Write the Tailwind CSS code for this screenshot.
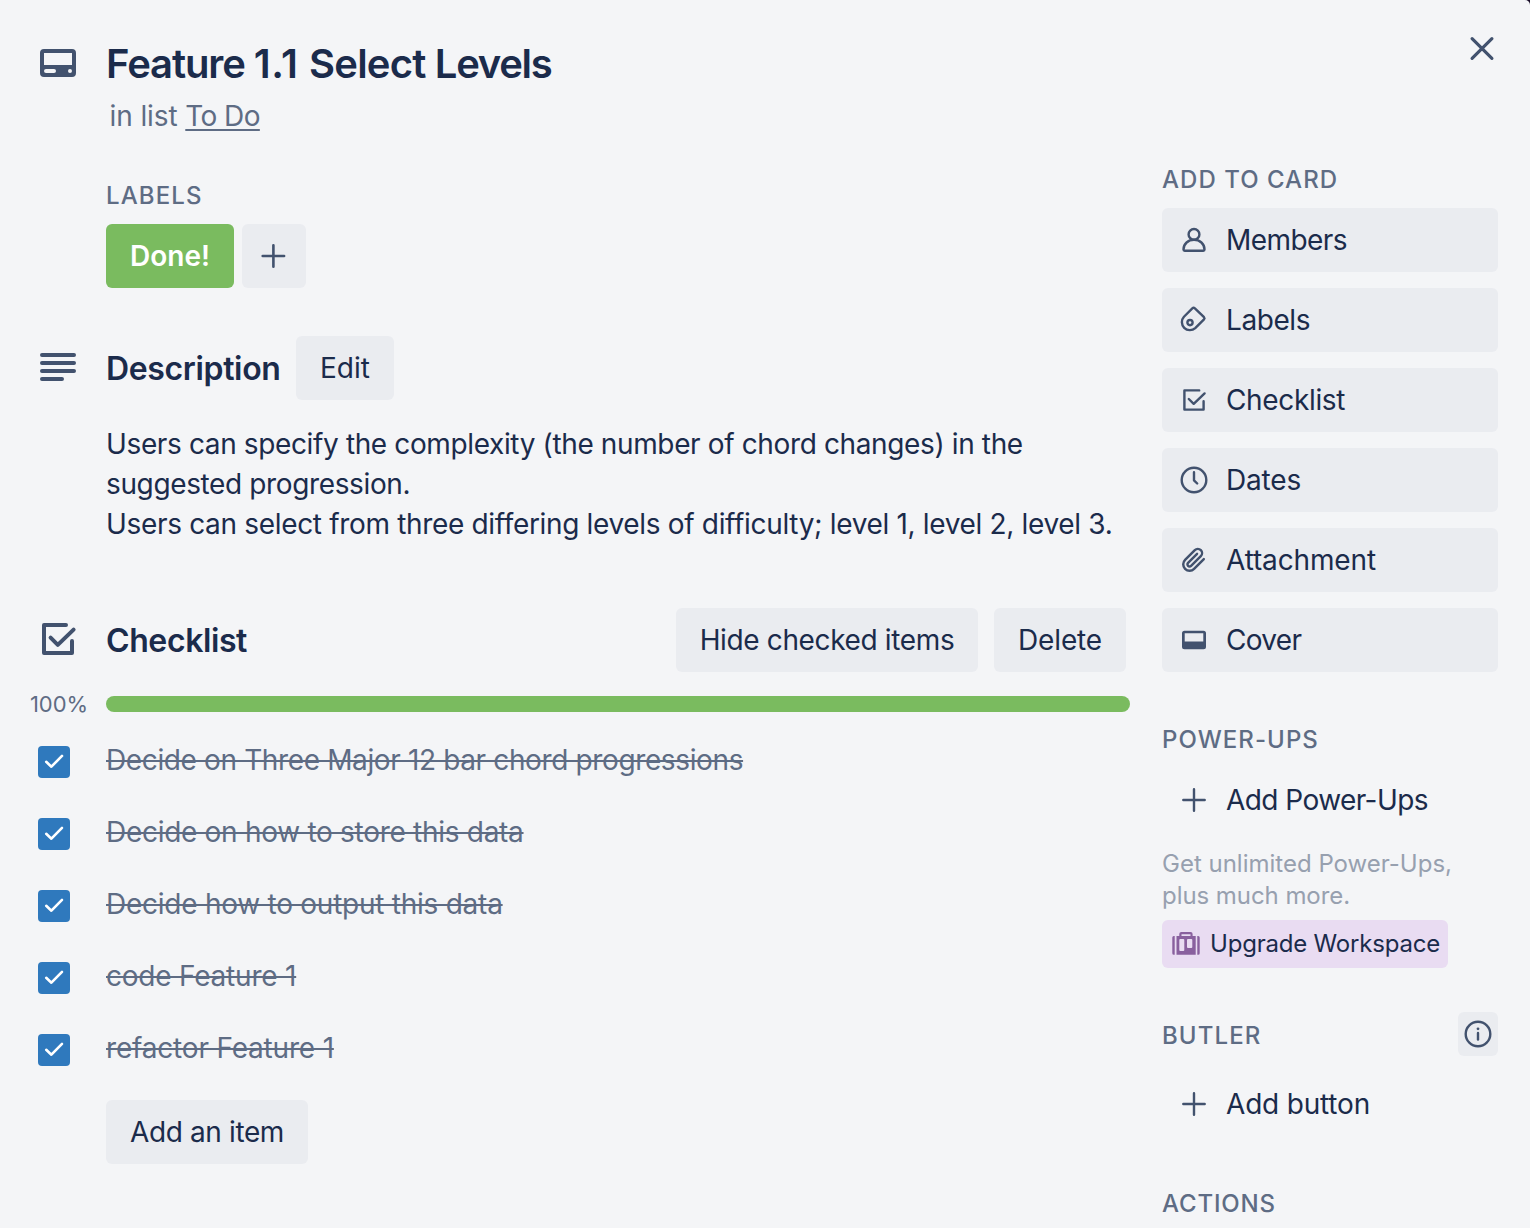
<!DOCTYPE html>
<html lang="en">
<head>
<meta charset="utf-8">
<title>Feature 1.1 Select Levels</title>
<script src="https://cdn.jsdelivr.net/npm/@tailwindcss/browser@4"></script>
</head>
<body class="bg-[#170b26] font-['Inter',sans-serif] text-[28px] leading-10 text-[#1b2b4b]">
<div class="relative flex h-[1228px] w-[1530px] overflow-hidden rounded-tr-[5px] bg-[#f4f5f7] whitespace-nowrap">

  <!-- Close -->
  <button class="absolute top-6 right-6 size-12 text-[#42526e]" aria-label="Close">
    <svg class="size-12" viewBox="0 0 48 48" fill="none" stroke="currentColor" stroke-width="3.2" stroke-linecap="round"><path d="M14.1 14.6 33.9 34.4M33.9 14.6 14.1 34.4"/></svg>
  </button>

  <main class="w-[1130px] shrink-0 pt-10">
    <!-- Card title -->
    <header class="flex">
      <div class="w-[106px] shrink-0 pl-[34px]">
        <svg class="-mt-px size-12 text-[#42526e]" viewBox="0 0 24 24" fill="currentColor"><path fill-rule="evenodd" d="M5 5h14a2 2 0 0 1 2 2v10a2 2 0 0 1-2 2H5a2 2 0 0 1-2-2V7a2 2 0 0 1 2-2Zm0 2v6h14V7H5Zm1 8a1 1 0 1 0 0 2h4a1 1 0 1 0 0-2H6Zm12 0a1 1 0 1 0 0 2 1 1 0 0 0 0-2Z"/></svg>
      </div>
      <div>
        <h1 class="text-[40px] leading-12 font-semibold tracking-[-0.8px]"><span class="tracking-[-1.1px]">Feature </span><span class="tracking-[0.55px]">1.1 </span>Select <span class="tracking-[-1.3px]">Levels</span></h1>
        <p class="mt-2 pl-[3.5px] tracking-[-0.1px] text-[#5e6c84]">in list <a class="tracking-[-0.6px] underline decoration-2 underline-offset-[3px]">To Do</a></p>
      </div>
    </header>

    <!-- Labels -->
    <section class="mt-12 pl-[106px]">
      <h3 class="text-2xl leading-6 font-medium tracking-[1.1px] text-[#5e6c84]">LABELS</h3>
      <div class="mt-4 flex gap-2">
        <span class="flex h-16 w-32 items-center justify-center rounded-md bg-[#7abb5f] font-semibold text-white">Done!</span>
        <button class="flex size-16 items-center justify-center rounded-md bg-[#eaecf0] text-[#42526e]">
          <svg class="size-10" viewBox="0 0 40 40" fill="none" stroke="currentColor" stroke-width="2.6" stroke-linecap="round"><path d="M19.4 9.3v21.4M8.7 20h21.4"/></svg>
        </button>
      </div>
    </section>

    <!-- Description -->
    <section class="mt-12">
      <div class="flex h-16 items-center">
        <div class="w-[106px] shrink-0 pl-[34px]">
          <svg class="-mt-0.5 size-12 text-[#42526e]" viewBox="0 0 48 48" fill="none" stroke="currentColor" stroke-width="4" stroke-linecap="round"><path d="M8 12h32M8 20h32M8 28h32M8 36h20"/></svg>
        </div>
        <h2 class="w-[174px] pt-0.5 text-[32px] font-semibold tracking-[-0.35px]">Description</h2>
        <button class="ml-4 h-16 w-[98px] rounded-md bg-[#eaecf0]">Edit</button>
      </div>
      <p class="mt-6 pl-[106px] tracking-[-0.37px]">Users can specify the complexity (the number of chord changes) in the<br>suggested progression.<br><span class="tracking-[-0.33px]">Users can select from three differing levels of difficulty; level 1, level 2, level 3.</span></p>
    </section>

    <!-- Checklist -->
    <section class="mt-16">
      <div class="flex h-16 items-center pr-1">
        <div class="w-[106px] shrink-0 pl-[34px]">
          <svg class="-mt-0.5 size-12 text-[#42526e]" viewBox="0 0 48 48" fill="none" stroke="currentColor" stroke-width="4" stroke-linecap="round" stroke-linejoin="round"><path d="M32 10H10v28h28V26"/><path d="m16.6 22.7 7.2 7.2L39.6 14.6"/></svg>
        </div>
        <h2 class="pt-0.5 text-[32px] font-semibold tracking-[-0.4px]">Checklist</h2>
        <button class="ml-auto h-16 w-[302px] rounded-md bg-[#eaecf0] tracking-[-0.36px]">Hide checked items</button>
        <button class="ml-4 h-16 w-[132px] rounded-md bg-[#eaecf0] tracking-[-0.14px]">Delete</button>
      </div>
      <div class="mt-4 flex h-8 items-center">
        <span class="w-[106px] shrink-0 pl-[30px] text-[22px] tracking-[-0.1px] text-[#5e6c84]">100%</span>
        <div class="h-4 flex-1 rounded-full bg-[#7abb5f]"></div>
      </div>

      <ul class="mt-5 flex flex-col gap-8 text-[#5e6c84] [&_span]:line-through [&_span]:decoration-2">
        <li class="flex h-10 items-center">
          <div class="w-[106px] shrink-0 pt-1 pl-[38px]"><svg class="size-8 rounded-[4px] bg-[#2f79bd]" viewBox="0 0 32 32" fill="none" stroke="#fff" stroke-width="2.6" stroke-linecap="round" stroke-linejoin="round"><path d="m8.2 15.8 5.2 4.9L24 9.9"/></svg></div>
          <span class="tracking-[-0.37px]">Decide on Three Major 12 bar chord progressions</span>
        </li>
        <li class="flex h-10 items-center">
          <div class="w-[106px] shrink-0 pt-1 pl-[38px]"><svg class="size-8 rounded-[4px] bg-[#2f79bd]" viewBox="0 0 32 32" fill="none" stroke="#fff" stroke-width="2.6" stroke-linecap="round" stroke-linejoin="round"><path d="m8.2 15.8 5.2 4.9L24 9.9"/></svg></div>
          <span class="tracking-[-0.29px]">Decide on how to store this data</span>
        </li>
        <li class="flex h-10 items-center">
          <div class="w-[106px] shrink-0 pt-1 pl-[38px]"><svg class="size-8 rounded-[4px] bg-[#2f79bd]" viewBox="0 0 32 32" fill="none" stroke="#fff" stroke-width="2.6" stroke-linecap="round" stroke-linejoin="round"><path d="m8.2 15.8 5.2 4.9L24 9.9"/></svg></div>
          <span class="tracking-[-0.25px]">Decide how to output this data</span>
        </li>
        <li class="flex h-10 items-center">
          <div class="w-[106px] shrink-0 pt-1 pl-[38px]"><svg class="size-8 rounded-[4px] bg-[#2f79bd]" viewBox="0 0 32 32" fill="none" stroke="#fff" stroke-width="2.6" stroke-linecap="round" stroke-linejoin="round"><path d="m8.2 15.8 5.2 4.9L24 9.9"/></svg></div>
          <span class="tracking-[-0.22px]">code Feature 1</span>
        </li>
        <li class="flex h-10 items-center">
          <div class="w-[106px] shrink-0 pt-1 pl-[38px]"><svg class="size-8 rounded-[4px] bg-[#2f79bd]" viewBox="0 0 32 32" fill="none" stroke="#fff" stroke-width="2.6" stroke-linecap="round" stroke-linejoin="round"><path d="m8.2 15.8 5.2 4.9L24 9.9"/></svg></div>
          <span class="tracking-[-0.19px]">refactor Feature 1</span>
        </li>
      </ul>
      <button class="mt-8 ml-[106px] block h-16 w-[202px] rounded-md bg-[#eaecf0] tracking-[-0.38px]">Add an item</button>
    </section>
  </main>

  <aside class="ml-8 w-[336px] shrink-0 pt-[168px]">
    <!-- Add to card -->
    <h3 class="text-2xl leading-6 font-medium tracking-[1.03px] text-[#5e6c84]">ADD TO CARD</h3>
    <div class="mt-4 flex flex-col gap-4 [&_svg]:size-10 [&_svg]:text-[#42526e]">
      <button class="flex h-16 items-center gap-3 rounded-md bg-[#eaecf0] pl-3 tracking-[-0.56px]">
        <svg viewBox="0 0 40 40" fill="none" stroke="currentColor" stroke-width="2.4" stroke-linejoin="round"><circle cx="20" cy="14.4" r="5.4"/><path d="M9.5 29.5C9.5 23.8 14.2 19.8 20 19.8S30.5 23.8 30.5 29.5a1.2 1.2 0 0 1-1.2 1.2H10.7a1.2 1.2 0 0 1-1.2-1.2Z"/></svg>
        Members
      </button>
      <button class="flex h-16 items-center gap-3 rounded-md bg-[#eaecf0] pl-3 tracking-[-0.43px]">
        <svg viewBox="0 0 40 40" fill="none" stroke="currentColor" stroke-width="2.4"><path d="M9.95 16.75 18.3 8.4Q19.6 7.3 20.9 8.4L30 17.2Q31 18.3 30 19.3L21.25 28.05A8 8 0 0 1 9.95 16.75Z"/><circle cx="16" cy="22.6" r="2.6"/></svg>
        Labels
      </button>
      <button class="flex h-16 items-center gap-3 rounded-md bg-[#eaecf0] pl-3 tracking-[-0.35px]">
        <svg viewBox="0 0 40 40" fill="none" stroke="currentColor" stroke-width="2.4" stroke-linecap="round" stroke-linejoin="round"><path d="M25.2 10.4H10.4v19.2h19.2v-8.4"/><path d="m14.8 19 4.9 4.8L30.6 13.4"/></svg>
        Checklist
      </button>
      <button class="flex h-16 items-center gap-3 rounded-md bg-[#eaecf0] pl-3 tracking-[-0.18px]">
        <svg viewBox="0 0 40 40" fill="none" stroke="currentColor" stroke-width="2.4" stroke-linecap="round" stroke-linejoin="round"><circle cx="20" cy="20" r="12.3"/><path d="M20 12.3v8l3.2 3.2"/></svg>
        Dates
      </button>
      <button class="flex h-16 items-center gap-3 rounded-md bg-[#eaecf0] pl-3 tracking-[-0.14px]">
        <svg viewBox="0 0 40 40" fill="none" stroke="currentColor" stroke-width="2.3" stroke-linecap="round" stroke-linejoin="round"><path transform="translate(7.1 7.4) scale(1.06)" d="m21.44 11.05-9.19 9.19a6 6 0 0 1-8.49-8.49l9.19-9.19a4 4 0 0 1 5.66 5.66l-9.2 9.19a2 2 0 0 1-2.83-2.83l8.49-8.48"/></svg>
        Attachment
      </button>
      <button class="flex h-16 items-center gap-3 rounded-md bg-[#eaecf0] pl-3 tracking-[-0.7px]">
        <svg viewBox="0 0 40 40" fill="currentColor"><path fill-rule="evenodd" d="M10.5 10.7h19a2.5 2.5 0 0 1 2.5 2.5v13.6a2.5 2.5 0 0 1-2.5 2.5h-19A2.5 2.5 0 0 1 8 26.8V13.2a2.5 2.5 0 0 1 2.5-2.5Zm.2 2.5v8.2h18.6v-8.2H10.7Z"/></svg>
        Cover
      </button>
    </div>

    <!-- Power-Ups -->
    <h3 class="mt-14 text-2xl leading-6 font-medium tracking-[1.05px] text-[#5e6c84]">POWER-UPS</h3>
    <button class="mt-4 flex h-16 items-center gap-3 pl-3 tracking-[-0.56px]">
      <svg class="size-10 text-[#42526e]" viewBox="0 0 40 40" fill="none" stroke="currentColor" stroke-width="2.4" stroke-linecap="round"><path d="M20 9.3v21.4M9.3 20h21.4"/></svg>
      Add Power-Ups
    </button>
    <p class="mt-4 text-2xl leading-8 text-[#97a0af]">Get unlimited Power-Ups,<br><span class="tracking-[-0.06px]">plus much more.</span></p>
    <button class="mt-2 flex h-12 w-[286px] items-center rounded-md bg-[#e9dcf2] pl-1.5 text-2xl tracking-[-0.2px]">
      <svg class="mr-1.5 size-9 text-[#89609e]" viewBox="0 0 36 36" fill="currentColor"><path d="M6.7 10v18.7H5.800a1.5 1.5 0 0 1-1.5-1.500V11.500A1.5 1.5 0 0 1 5.800 10Zm22.600 0v18.700h.9a1.500 1.500 0 0 0 1.500-1.500V11.500a1.500 1.500 0 0 0-1.500-1.500Z"/><path fill-rule="evenodd" d="M8.500 10h2.800V8a2 2 0 0 1 2-2h9.300a2 2 0 0 1 2 2v2h3.100v18.700H8.500Zm5-1.700V10h9V8.300Zm-1.200 4.700a1 1 0 0 0-1 1v10a1 1 0 0 0 1 1h3a1 1 0 0 0 1-1V14a1 1 0 0 0-1-1Zm7.700 0a1 1 0 0 0-1 1v7a1 1 0 0 0 1 1h3.300a1 1 0 0 0 1-1v-7a1 1 0 0 0-1-1Z"/></svg>
      Upgrade Workspace
    </button>

    <!-- Butler -->
    <div class="mt-11 flex h-11 items-center justify-between">
      <h3 class="pt-1 text-2xl leading-6 font-medium tracking-[1.1px] text-[#5e6c84]">BUTLER</h3>
      <button class="flex h-11 w-10 items-center justify-center rounded-md bg-[#eaecf0] text-[#42526e]" aria-label="About Butler">
        <svg class="size-10" viewBox="0 0 40 40" fill="none" stroke="currentColor" stroke-width="2.4" stroke-linecap="round"><circle cx="20" cy="20" r="12.3"/><path d="M20 19v6.600"/><circle cx="20" cy="14.800" r="1.400" fill="currentColor" stroke="none"/></svg>
      </button>
    </div>
    <button class="mt-4 flex h-16 items-center gap-3 pl-3 tracking-[-0.19px]">
      <svg class="size-10 text-[#42526e]" viewBox="0 0 40 40" fill="none" stroke="currentColor" stroke-width="2.4" stroke-linecap="round"><path d="M20 9.3v21.4M9.3 20h21.4"/></svg>
      Add button
    </button>

    <!-- Actions -->
    <h3 class="mt-14 text-2xl leading-6 font-medium tracking-[0.85px] text-[#5e6c84]">ACTIONS</h3>
  </aside>
</div>
</body>
</html>
